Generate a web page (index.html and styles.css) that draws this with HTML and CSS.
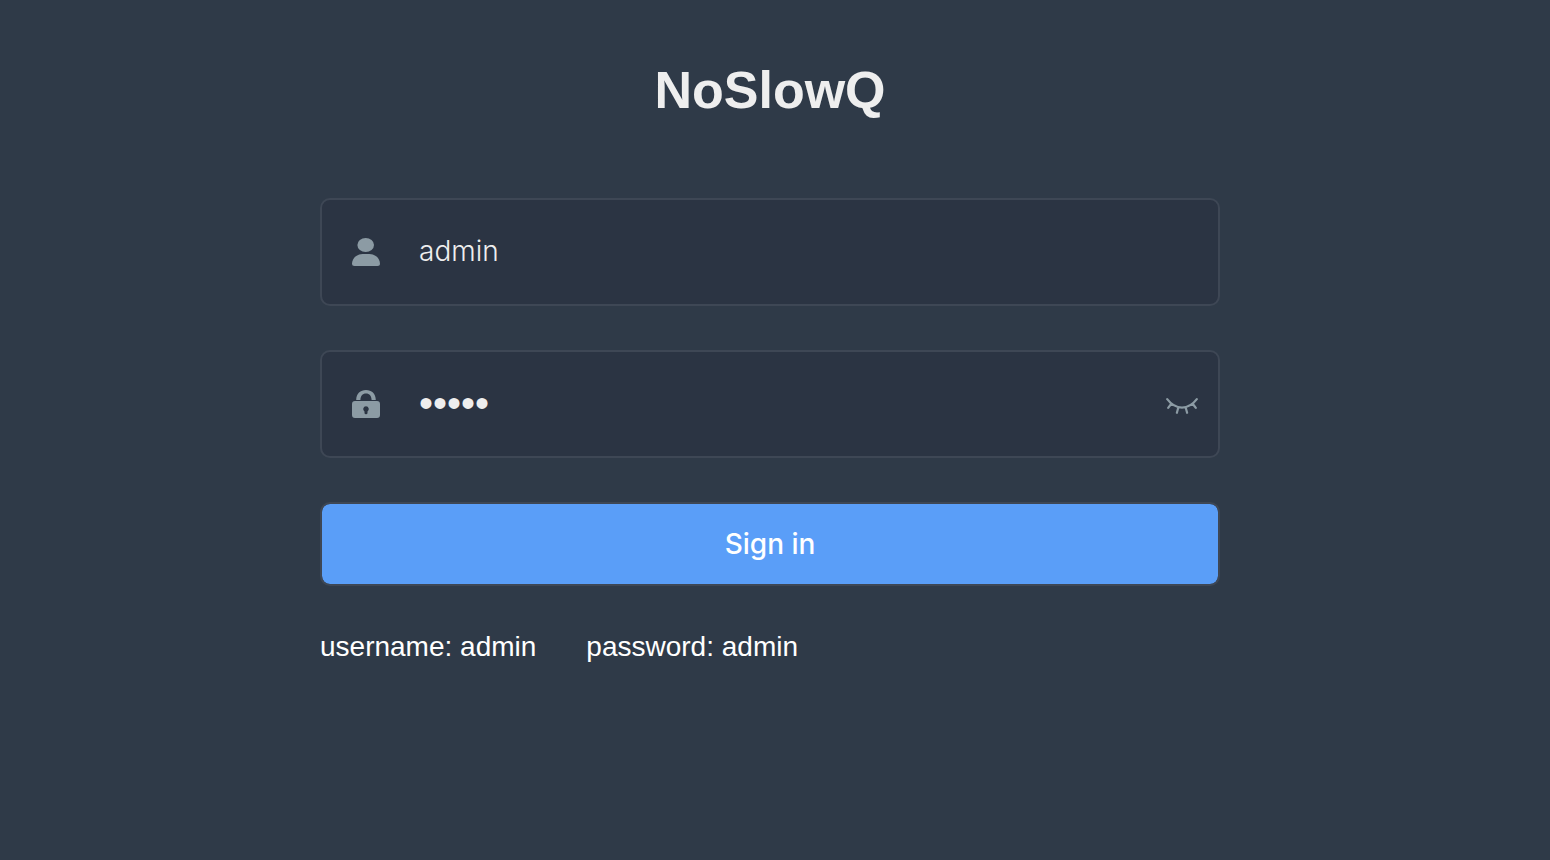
FILE: index.html
```html
<!DOCTYPE html>
<html lang="en">
<head>
<meta charset="utf-8">
<meta name="viewport" content="width=device-width, initial-scale=1">
<title>NoSlowQ</title>
<link rel="stylesheet" href="styles.css">
</head>
<body>
<main class="login">
  <form class="login-form">
    <h1 class="title">NoSlowQ</h1>
    <div class="field">
      <label class="field-icon" for="username" aria-label="Username">
        <svg width="28" height="28" viewBox="0 0 28 28" fill="currentColor"><ellipse cx="13.700" cy="7" rx="8.300" ry="7"/><path d="M2.500 28Q0 28 0 25.500C.5 19.500 5.500 16 10.500 16h7C22.500 16 27.500 19.500 28 25.500Q28 28 25.500 28Z"/></svg>
      </label>
      <input class="field-input" id="username" type="text" value="admin">
    </div>
    <div class="field">
      <label class="field-icon" for="password" aria-label="Password">
        <svg width="28" height="28" viewBox="0 0 28 28" fill="currentColor"><path d="M4.200 10C4.200 3.500 8.500 0 14 0s9.800 3.500 9.800 10h-4.200C19.600 6 17.500 3.400 14 3.400S8.400 6 8.400 10Z"/><path fill-rule="evenodd" d="M3 11h22q3 0 3 3v11q0 3-3 3H3q-3 0-3-3V14q0-3 3-3Zm11 5.200a2.900 2.900 0 0 0-1.500 5.300V23q0 1.300 1.500 1.300t1.500-1.300v-1.500A2.900 2.900 0 0 0 14 16.200Z"/></svg>
      </label>
      <input class="field-input field-input-password" id="password" type="password" value="admin">
      <button class="show-password" type="button" aria-label="Show password">
        <svg width="32" height="16" viewBox="0 0 32 16" fill="none" stroke="currentColor" stroke-width="2.200" stroke-linecap="round"><path d="M1.200 1.200C9.500 12.300 22.500 12.300 30.800 1.200M5.500 5.500 2.200 9.800M12.300 9.500 10.900 14.800M19.700 9.500l1.400 5.300M26.500 5.500l3.300 4.300"/></svg>
      </button>
    </div>
    <button class="submit" type="submit">Sign in</button>
    <p class="tips"><span>username: admin</span><span>password: admin</span></p>
  </form>
</main>
</body>
</html>
```
FILE: styles.css
```css
* {
  box-sizing: border-box;
}

body {
  margin: 0;
  min-height: 100vh;
  background: #2f3a48;
  color: #fff;
  font-family: "Liberation Sans", Arial, sans-serif;
  font-size: 28px;
}

.login {
  padding: 60px 10px 60px 0;
}

.login-form {
  max-width: 900px;
  margin: 0 auto;
}

.title {
  margin: 0 0 78px;
  color: #eee;
  font-size: 52px;
  line-height: 60px;
  text-align: center;
}

.field {
  display: flex;
  align-items: center;
  height: 108px;
  margin-bottom: 44px;
  padding: 0 20px 0 30px;
  border: 2px solid #3e4755;
  border-radius: 10px;
  background: #2b3443;
  color: #8c9ba4;
}

.field-icon {
  display: flex;
  margin-right: 39px;
}

.field-input {
  flex: 1;
  min-width: 0;
  height: 94px;
  padding: 0 0 2px;
  border: 0;
  outline: 0;
  background: transparent;
  color: #eee;
  font: 300 28px/32px Inter, "Liberation Sans", sans-serif;
}

.field-input-password {
  font: 40px/48px "Liberation Sans", Arial, sans-serif;
}

.show-password {
  display: flex;
  padding: 4px 0 0;
  border: 0;
  background: none;
  color: inherit;
  cursor: pointer;
}

.submit {
  display: block;
  width: 100%;
  height: 84px;
  margin: 0 0 45px;
  padding: 0;
  border: 2px solid #3e4755;
  border-radius: 10px;
  background: #5a9ef8;
  background-clip: padding-box;
  color: #fff;
  font: 500 28px/32px Inter, "Liberation Sans", sans-serif;
  cursor: pointer;
}

.tips {
  display: flex;
  gap: 50px;
  margin: 0;
  line-height: 32px;
}
```
